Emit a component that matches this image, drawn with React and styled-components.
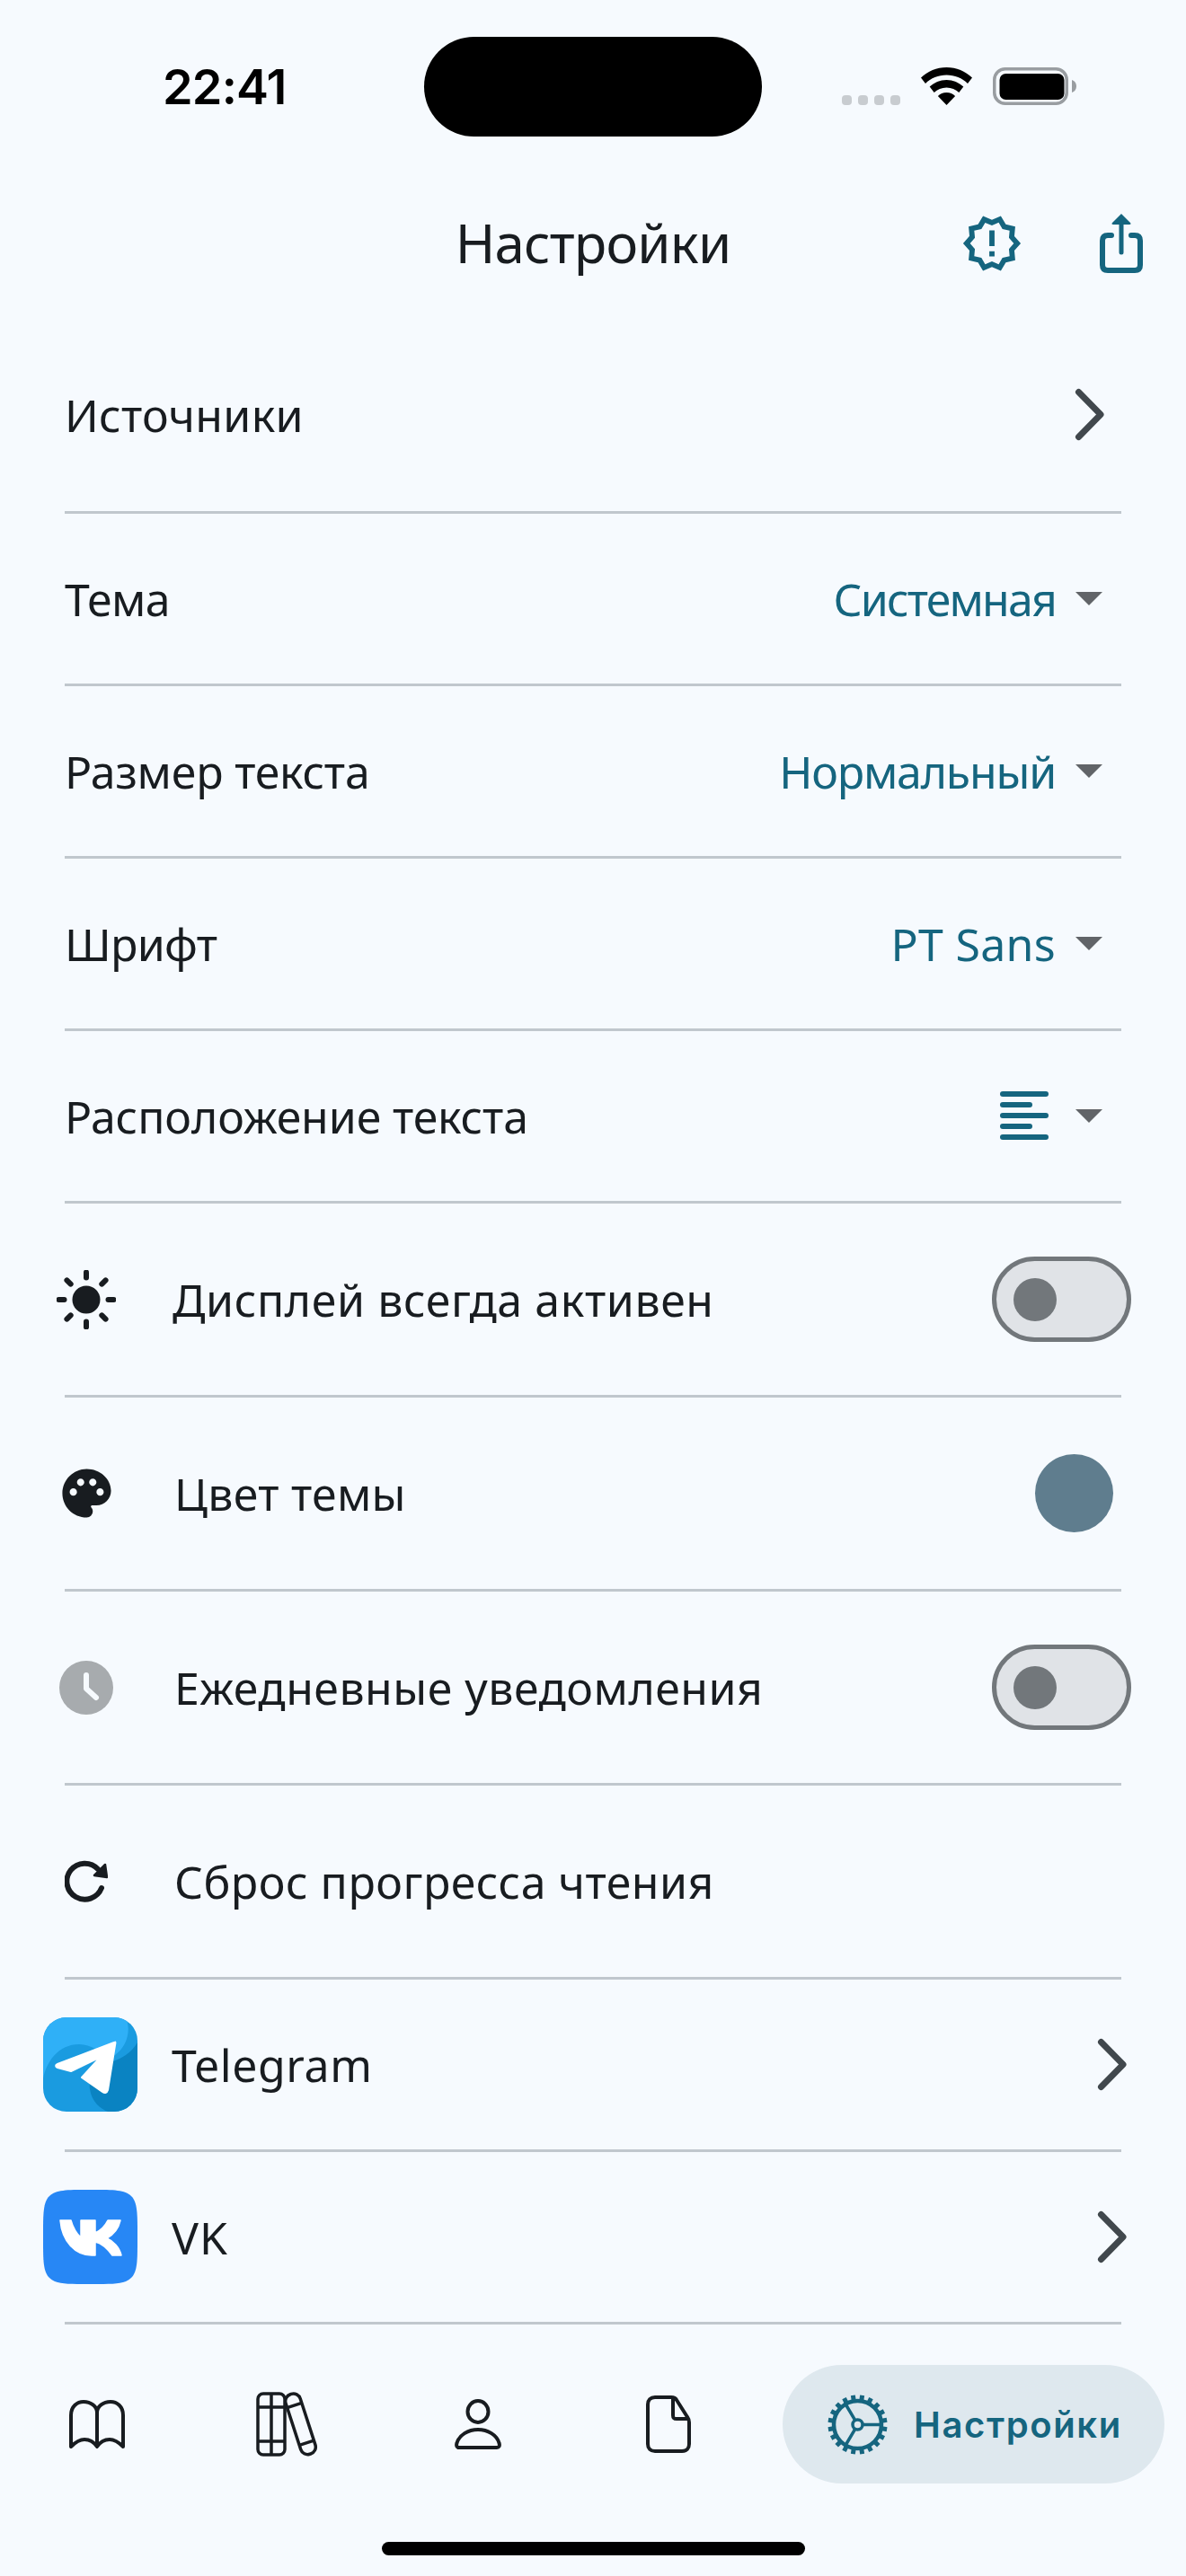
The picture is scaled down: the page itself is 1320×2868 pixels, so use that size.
import React from 'react';
import styled, { createGlobalStyle } from 'styled-components';
import { MdOutlineNewReleases, MdPalette } from 'react-icons/md';

const INK = '#181c20';
const TEAL = '#15657f';
const LINE = '#c0c7cd';

const Global = createGlobalStyle`
  html, body { margin: 0; padding: 0; background: #f6fafe; }
  * { box-sizing: border-box; }
`;
const Page = styled.div`
  width: 1320px; height: 2868px; overflow: hidden; background: #f6fafe; color: ${INK};
  display: flex; flex-direction: column;
  font-family: "Noto Sans", "Open Sans", sans-serif;
`;
const StatusBar = styled.div`
  height: 190px; padding: 41px 0 0 181px; display: flex; align-items: flex-start;
`;
const Time = styled.div`
  width: 139px; height: 111px; display: flex; align-items: center; white-space: nowrap;
  font: 600 54px "Inter", sans-serif; color: #000; letter-spacing: -0.8px;
`;
const Island = styled.div`
  width: 376px; height: 111px; margin-left: 152px; border-radius: 56px; background: #000;
`;
const StatusIcons = styled.div`
  margin: 34px 0 0 89px; height: 42px; display: flex; align-items: flex-end;
`;
const Dots = styled.div`display: flex; gap: 7px; margin-right: 23px;`;
const Dot = styled.i`display: block; width: 11px; height: 11px; border-radius: 4px; background: #c8ccd0;`;
const Header = styled.div`
  height: 160px; position: relative; display: flex; align-items: center; justify-content: center;
`;
const Title = styled.h1`
  margin: 0; font-size: 60px; font-weight: 400; line-height: 1; color: ${INK};
  letter-spacing: -0.8px;
`;
const HeaderIcons = styled.div`
  position: absolute; left: 1069px; top: 46px; display: flex; align-items: center; color: ${TEAL};
  svg { display: block; flex: none; }
`;
const List = styled.div`padding: 0 72px; display: flex; flex-direction: column;`;
const Row = styled.div`
  height: ${p => p.$h}px; border-bottom: 3px solid ${LINE}; display: flex; align-items: center;
  padding-top: ${p => p.$pt || 0}px;
`;
const Label = styled.span`
  font-size: 50px; letter-spacing: ${p => p.$ls ?? 0}px; line-height: 1; white-space: nowrap; color: ${INK};
  margin-left: ${p => p.$ml || 0}px;
`;
const Value = styled.span`
  margin-left: auto; font-size: 50px; letter-spacing: ${p => p.$ls ?? -1.2}px; line-height: 1; color: ${TEAL}; white-space: nowrap;
`;
const Caret = styled.i`
  display: block; width: 0; height: 0; margin: 0 21px 0 22px;
  border-left: 15px solid transparent; border-right: 15px solid transparent; border-top: 15px solid #616468;
`;
const LeadIcon = styled.div`
  width: 48px; flex: none; display: flex; justify-content: center; svg { display: block; flex: none; }
`;
const Brand = styled.div`
  width: 105px; height: 105px; flex: none; margin-left: -24px; svg { display: block; }
`;
const End = styled.div`margin-left: auto; display: flex; align-items: center; margin-right: ${p => p.$mr || 0}px; svg { display: block; }`;
const Switch = styled.div`
  width: 155px; height: 95px; border-radius: 48px; border: 5px solid #72777b; background: #e0e3e7;
  display: flex; align-items: center; padding-left: 19px;
`;
const Knob = styled.i`display: block; width: 48px; height: 48px; border-radius: 50%; background: #72777b;`;
const Swatch = styled.div`width: 87px; height: 87px; border-radius: 50%; background: #5f7d8e;`;
const Nav = styled.nav`
  display: flex; align-items: center; height: 132px; margin-top: 45px; padding-left: 2px;
`;
const NavItem = styled.div`
  width: 212px; display: flex; justify-content: center; svg { display: block; }
`;
const Pill = styled.div`
  width: 425px; height: 132px; margin-left: 21px; border-radius: 66px; background: #dee8ee; color: ${TEAL};
  display: flex; align-items: center; padding-left: 50px; gap: 29px;
  svg { display: block; flex: none; }
`;
const PillText = styled.span`font: 600 40px "Inter", sans-serif; letter-spacing: 1.6px; white-space: nowrap;`;
const HomeBar = styled.div`
  width: 471px; height: 15px; border-radius: 8px; background: #000; margin: 65px 0 0 425px;
`;

const Chevron = () => (
  <svg width="33" height="59" viewBox="0 0 33 59" fill="none">
    <path d="M4.500 4.500 L29 29.500 L4.500 54.500" stroke="#41484d" strokeWidth="7" strokeLinecap="round" strokeLinejoin="round" />
  </svg>
);
const Wifi = () => (
  <svg width="57" height="42" viewBox="0 0 57 42" style={{ marginRight: 23 }}>
    <path d="M28.500 0C17.500 0 7.500 4.400 0 11.500l5 6.500C11 12 19.300 8.600 28.500 8.600S46 12 52 18l5-6.500C49.500 4.400 39.500 0 28.500 0z" />
    <path d="M28.500 14C21.200 14 14.600 16.900 9.700 21.600l5 6.400c3.500-3.500 8.400-5.600 13.800-5.600s10.300 2.100 13.800 5.600l5-6.400C42.400 16.900 35.800 14 28.500 14z" />
    <path d="M28.500 28c-3.800 0-7.200 1.500-9.600 4L28.500 42l9.600-10c-2.400-2.500-5.800-4-9.600-4z" />
  </svg>
);
const Battery = () => (
  <svg width="93" height="42" viewBox="0 0 93 42">
    <rect x="1.750" y="1.750" width="80.500" height="38.500" rx="12" fill="none" stroke="#999da1" strokeWidth="3.500" />
    <rect x="7.500" y="7" width="72" height="29" rx="7" fill="#000" />
    <path d="M88 14c3 1 5 3.500 5 7s-2 6-5 7z" fill="#999da1" />
  </svg>
);
const Share = () => (
  <svg width="48" height="66" viewBox="0 0 48 66" fill="none" style={{ marginLeft: 85 }}>
    <path d="M13 24 H9 C5 24 3 26 3 30 V57 C3 61 5 63 9 63 H39 C43 63 45 61 45 57 V30 C45 26 43 24 39 24 H35" stroke={TEAL} strokeWidth="6" strokeLinecap="round" />
    <path d="M24 8 V43" stroke={TEAL} strokeWidth="5" strokeLinecap="round" />
    <path d="M24 0 L34 10 C35 11 34.500 12 33 12 H15 C13.500 12 13 11 14 10 Z" fill={TEAL} />
  </svg>
);
const AlignLeft = () => (
  <svg width="54" height="54" viewBox="0 0 54 54" fill={TEAL} style={{ marginTop: -2 }}>
    <rect x="0" y="0" width="54" height="6" rx="3" />
    <rect x="0" y="12" width="36" height="6" rx="3" />
    <rect x="0" y="24" width="54" height="6" rx="3" />
    <rect x="0" y="36" width="36" height="6" rx="3" />
    <rect x="0" y="48" width="54" height="6" rx="3" />
  </svg>
);
const Sun = () => {
  const rays = [0, 45, 90, 135, 180, 225, 270, 315];
  return (
    <svg width="66" height="66" viewBox="-33 -33 66 66" style={{ margin: '0 -9px' }}>
      <circle r="15.500" fill={INK} />
      {rays.map(a => (
        <line key={a} x1="0" y1="-24.500" x2="0" y2="-30.500" stroke={INK} strokeWidth="6" strokeLinecap="round" transform={`rotate(${a})`} />
      ))}
    </svg>
  );
};
const Clock = () => (
  <svg width="60" height="60" viewBox="0 0 60 60" style={{ margin: '0 -6px' }}>
    <circle cx="30" cy="30" r="30" fill="#a7abae" />
    <path d="M30 16 V31 L41 41" fill="none" stroke="#f6fafe" strokeWidth="6" strokeLinecap="round" strokeLinejoin="round" />
  </svg>
);
const Refresh = () => (
  <svg width="48" height="48" viewBox="0 0 48 48" fill="none">
    <path d="M41 31 A20 20 0 1 1 37 10" stroke={INK} strokeWidth="6" strokeLinecap="round" />
    <path d="M33 17 L45 5 L47 19 Z" fill={INK} stroke={INK} strokeWidth="2.500" strokeLinejoin="round" />
  </svg>
);
const Telegram = () => (
  <svg width="105" height="105" viewBox="0 0 105 105">
    <defs><clipPath id="tg"><rect width="105" height="105" rx="26" /></clipPath></defs>
    <g clipPath="url(#tg)">
      <rect width="105" height="105" fill="#1a9be0" />
      <path d="M0 0 H92 C98 14 94 32 80 42 C70 48 60 30 40 30 C18 30 4 48 0 68 Z" fill="#2fb0f7" />
      <path d="M105 28 C96 44 80 48 70 52 C58 58 50 70 52 80 C54 94 64 102 72 105 H105 Z" fill="#0a83c2" />
    </g>
    <path d="M79 28 L16 52 C13.500 53 13.500 55 16 56 L31 60 L64 44 L43 67 L66 83 C69 85 71 84 72 81 L80 31 C80.500 28 81 27 79 28 Z" fill="#fff" stroke="#fff" strokeWidth="2" strokeLinejoin="round" />
  </svg>
);
const VK = () => (
  <svg width="105" height="105" viewBox="0 0 105 105">
    <path d="M0 50C0 26 0 14 7 7S26 0 50 0h5c24 0 36 0 43 7s7 19 7 43v5c0 24 0 36-7 43s-19 7-43 7h-5c-24 0-36 0-43-7s-7-19-7-43z" fill="#2787f5" />
    <path d="M19 34 H31 C33 42 38 50 42 53 V34 H58 V48 C62 46 68 42 72 34 H86 C84 43 78 50 71 54 C78 57 85 64 87 73 H77 C72 66 66 60 58 58 V73 H54 C36 73 21 58 19 34 Z" fill="#fff" stroke="#fff" strokeWidth="1.500" strokeLinejoin="round" />
  </svg>
);
const BookIcon = () => (
  <svg width="62" height="54" viewBox="0 0 62 54" fill="none" stroke={INK} strokeWidth="4" strokeLinejoin="round">
    <path d="M2 52 V17 C2 7 9 2 16 2 C24 2 31 7 31 14 C31 7 38 2 46 2 C53 2 60 7 60 17 V52 C54 46 50 44 45 44 C38 44 33 49 31 52 C29 49 24 44 17 44 C12 44 8 46 2 52 Z" />
    <path d="M31 14 V52" />
  </svg>
);
const BooksIcon = () => (
  <svg width="72" height="72" viewBox="0 0 72 72" fill="none" stroke={INK} strokeWidth="3.500" style={{ marginLeft: 2 }}>
    <rect x="2" y="2" width="30" height="68" rx="6" />
    <path d="M17 2 V70 M2 17 H32 M2 55 H32" />
    <g transform="rotate(-18 49 36)">
      <rect x="41" y="1" width="17" height="70" rx="8" />
      <path d="M41 14 H58 M41 58 H58" />
    </g>
  </svg>
);
const PersonIcon = () => (
  <svg width="52" height="56" viewBox="0 0 52 56" fill="none" stroke={INK} strokeWidth="4">
    <ellipse cx="26" cy="14" rx="11.500" ry="12" />
    <path d="M5 54 C2.500 54 1.500 52 2.500 49 C5 40 15 34 26 34 C37 34 47 40 49.500 49 C50.500 52 49.500 54 47 54 Z" />
  </svg>
);
const FileIcon = () => (
  <svg width="50" height="64" viewBox="0 0 50 64" fill="none" stroke={INK} strokeWidth="4" strokeLinejoin="round">
    <path d="M10 2 H28 C31 2 33 3 34 5 L46 24 C47.500 26 48 27 48 30 V54 C48 59 45 62 40 62 H10 C5 62 2 59 2 54 V10 C2 5 5 2 10 2 Z" />
    <path d="M30 3 V22 C30 25 31 26 34 26 H47" />
  </svg>
);
const Gear = () => {
  const teeth = Array.from({ length: 20 }, (_, i) => i * 18 + 9);
  return (
    <svg width="67" height="67" viewBox="-33.500 -33.500 67 67" fill="none" stroke={TEAL}>
      <circle r="26.500" strokeWidth="4.500" />
      {teeth.map(a => <rect key={a} x="-2.500" y="-33" width="5" height="7" fill={TEAL} stroke="none" transform={`rotate(${a})`} />)}
      <circle r="5.500" strokeWidth="3.500" />
      <path d="M5.500 0 H26 M-2.750 -4.800 L-13.500 -23 M-2.750 4.800 L-13.500 23" strokeWidth="3.500" />
    </svg>
  );
};

const Select = ({ label, ls, value, vls, children }) => (
  <Row $h={192}>
    <Label $ls={ls}>{label}</Label>
    {value ? <Value $ls={vls}>{value}</Value> : <End $mr={8}>{children}</End>}
    <Caret />
  </Row>
);

export default function App() {
  return (
    <Page>
      <Global />
      <StatusBar>
        <Time>22:41</Time>
        <Island />
        <StatusIcons>
          <Dots><Dot /><Dot /><Dot /><Dot /></Dots>
          <Wifi />
          <Battery />
        </StatusIcons>
      </StatusBar>
      <Header>
        <Title>Настройки</Title>
        <HeaderIcons>
          <MdOutlineNewReleases size={70} />
          <Share />
        </HeaderIcons>
      </Header>
      <List>
        <Row $h={222} $pt={4}>
          <Label $ls={0.3}>Источники</Label>
          <End $mr={19}><Chevron /></End>
        </Row>
        <Select label="Тема" ls={-0.7} value="Системная" vls={-1.8} />
        <Select label="Размер текста" ls={-0.2} value="Нормальный" vls={-1.2} />
        <Select label="Шрифт" ls={-0.7} value="PT Sans" vls={0.3} />
        <Select label="Расположение текста" ls={-0.1}><AlignLeft /></Select>
        <Row $h={216}>
          <LeadIcon><Sun /></LeadIcon>
          <Label $ml={72} $ls={0.6}>Дисплей всегда активен</Label>
          <End $mr={-11}><Switch><Knob /></Switch></End>
        </Row>
        <Row $h={216}>
          <LeadIcon><MdPalette size={65} style={{ margin: '0 -9px' }} /></LeadIcon>
          <Label $ml={74} $ls={0.3}>Цвет темы</Label>
          <End $mr={9}><Swatch /></End>
        </Row>
        <Row $h={216}>
          <LeadIcon><Clock /></LeadIcon>
          <Label $ml={74} $ls={0.5}>Ежедневные уведомления</Label>
          <End $mr={-11}><Switch><Knob /></Switch></End>
        </Row>
        <Row $h={216}>
          <LeadIcon><Refresh /></LeadIcon>
          <Label $ml={74} $ls={0.5}>Сброс прогресса чтения</Label>
        </Row>
        <Row $h={192}>
          <Brand><Telegram /></Brand>
          <Label $ml={38} $ls={0.6}>Telegram</Label>
          <End $mr={-6}><Chevron /></End>
        </Row>
        <Row $h={192}>
          <Brand><VK /></Brand>
          <Label $ml={38} $ls={1}>VK</Label>
          <End $mr={-6}><Chevron /></End>
        </Row>
      </List>
      <Nav>
        <NavItem><BookIcon /></NavItem>
        <NavItem><BooksIcon /></NavItem>
        <NavItem><PersonIcon /></NavItem>
        <NavItem><FileIcon /></NavItem>
        <Pill><Gear /><PillText>Настройки</PillText></Pill>
      </Nav>
      <HomeBar />
    </Page>
  );
}
